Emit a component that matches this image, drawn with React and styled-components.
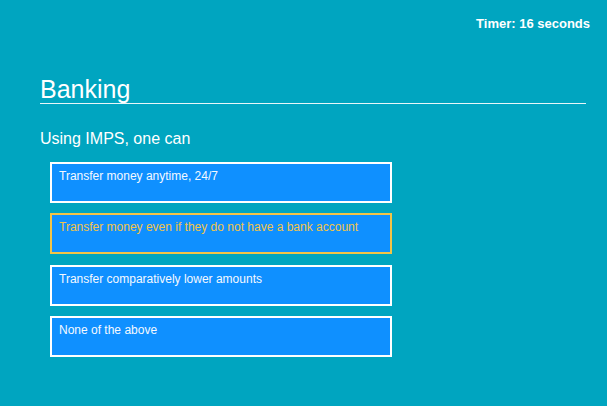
import React from "react";
import styled, { createGlobalStyle } from "styled-components";

const Global = createGlobalStyle`
  html, body { margin: 0; padding: 0; background: #00a5c0; }
  body { font-family: "Liberation Sans", Arial, Helvetica, sans-serif; }
`;

const Page = styled.div`
  width: 607px;
  height: 406px;
  box-sizing: border-box;
  padding: 16px 17px 0 40px;
  background: #00a5c0;
  color: #ffffff;
`;

const TopBar = styled.div`
  display: flex;
  justify-content: flex-end;
`;

const Timer = styled.div`
  font-size: 13px;
  font-weight: 700;
  line-height: 15px;
`;

const Title = styled.h1`
  margin: 45px 4px 0 0;
  font-size: 25px;
  font-weight: 400;
  line-height: 27px;
  border-bottom: 1px solid #e8f6f9;
`;

const Question = styled.p`
  margin: 26px 0 0 0;
  font-size: 16px;
  font-weight: 400;
  line-height: 18px;
`;

const Options = styled.div`
  margin: 14px 0 0 10px;
  width: 342px;
  display: flex;
  flex-direction: column;
  gap: 10.3px;
`;

const Option = styled.div`
  box-sizing: border-box;
  height: 41px;
  padding: 5px 7px;
  background: #0f90ff;
  border: 2px solid ${(p) => (p.$selected ? "#f2c447" : "#ffffff")};
  color: ${(p) => (p.$selected ? "#f2c447" : "#f4f9ff")};
  font-size: 12px;
  line-height: 14px;
  cursor: pointer;
`;

const options = [
  "Transfer money anytime, 24/7",
  "Transfer money even if they do not have a bank account",
  "Transfer comparatively lower amounts",
  "None of the above",
];

export default function App() {
  return (
    <>
      <Global />
      <Page>
        <TopBar>
          <Timer>Timer: 16 seconds</Timer>
        </TopBar>
        <Title>Banking</Title>
        <Question>Using IMPS, one can</Question>
        <Options>
          {options.map((o, i) => (
            <Option key={o} $selected={i === 1}>
              {o}
            </Option>
          ))}
        </Options>
      </Page>
    </>
  );
}
